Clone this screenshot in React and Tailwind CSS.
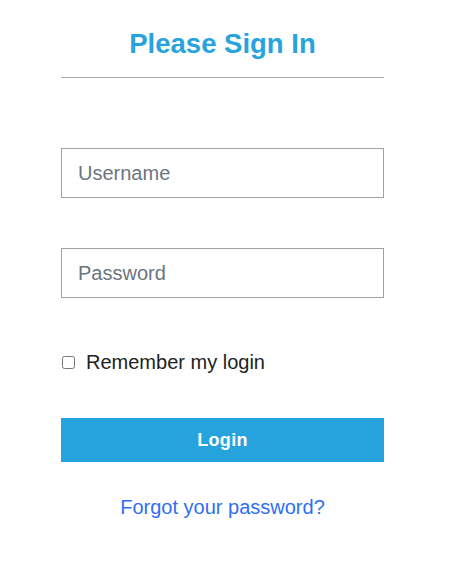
const App = () => {
  return (
    <div className="min-h-[564px] bg-white font-['Liberation_Sans',Arial,sans-serif]">
      <div className="ml-[61px] w-[323px] pt-[27px]">
        <h1 className="text-center text-[27.5px] font-bold leading-[34px] text-[#27a3dd]">Please Sign In</h1>
        <hr className="mt-[16px] border-0 border-t border-[#aaaaaa]" />
        <form className="mt-[70px]">
          <input
            type="text"
            placeholder="Username"
            className="block h-[50px] w-full border border-[#a0a0a0] px-4 text-[20px] text-[#333] placeholder:text-[#6c757d] outline-none"
          />
          <input
            type="password"
            placeholder="Password"
            className="mt-[50px] block h-[50px] w-full border border-[#a0a0a0] px-4 text-[20px] text-[#333] placeholder:text-[#6c757d] outline-none"
          />
          <label className="mt-[50px] flex items-center text-[20px] leading-[28px] text-[#222]">
            <input type="checkbox" className="ml-[1px] mr-[11px] h-[13px] w-[13px]" />
            Remember my login
          </label>
          <button
            type="button"
            className="mt-[42px] block h-[44px] w-full bg-[#26a3dc] text-[18px] font-bold tracking-[0.3px] text-white"
          >
            Login
          </button>
          <div className="mt-[33px] text-center">
            <a href="#" className="text-[20px] leading-[24px] text-[#2f6ef5]">Forgot your password?</a>
          </div>
        </form>
      </div>
    </div>
  );
};

export default App;
